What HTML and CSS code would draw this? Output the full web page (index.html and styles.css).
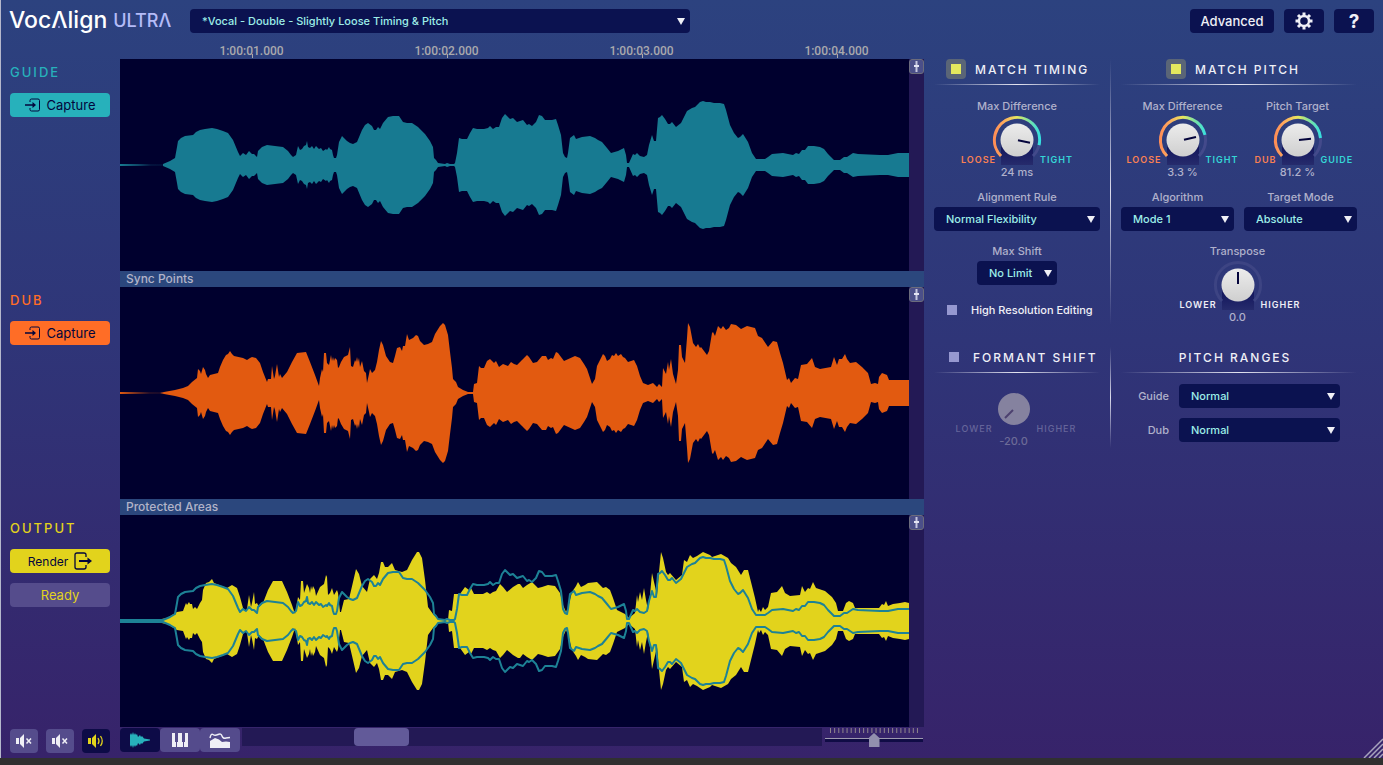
FILE: index.html
```html
<!DOCTYPE html>
<html lang="en">
<head>
<meta charset="utf-8">
<title>VocAlign Ultra</title>
<link rel="stylesheet" href="styles.css">
</head>
<body>
<svg class="defs" width="0" height="0" aria-hidden="true">
  <defs>
    <linearGradient id="arc" gradientUnits="userSpaceOnUse" x1="-23" y1="0" x2="23" y2="0">
      <stop offset="0" stop-color="#ff8d55"/><stop offset=".2" stop-color="#ffa95c"/><stop offset=".5" stop-color="#e6e85e"/><stop offset=".75" stop-color="#7de3a0"/><stop offset="1" stop-color="#35dfe0"/>
    </linearGradient>
    <linearGradient id="face" x1="0" y1="0" x2="0" y2="1"><stop offset="0" stop-color="#ececec"/><stop offset="1" stop-color="#cfcfcf"/></linearGradient>
    <linearGradient id="shade" x1="0" y1="0" x2="0" y2="1"><stop offset="0" stop-color="#10135a"/><stop offset="1" stop-color="#262b6c"/></linearGradient>
    <linearGradient id="fadeGuide"><stop offset="0" stop-color="#177a91"/><stop offset=".4" stop-color="#177a91" stop-opacity=".6"/><stop offset=".7" stop-color="#177a91" stop-opacity=".15"/><stop offset="1" stop-color="#177a91" stop-opacity=".1"/></linearGradient>
    <linearGradient id="fadeDub"><stop offset="0" stop-color="#e25a10"/><stop offset=".4" stop-color="#e25a10" stop-opacity=".5"/><stop offset=".7" stop-color="#e25a10" stop-opacity=".15"/><stop offset="1" stop-color="#e25a10" stop-opacity=".1"/></linearGradient>
    <path id="envGuide" vector-effect="non-scaling-stroke" d="M0 -1L43 -1 50 -4 55 -7 57 -18 58 -24 61 -27 65 -29 73 -30 76 -33 80 -35 85 -36 92 -37 97 -36 103 -34 108 -32 113 -25 118 -13 120 -9 123 -12 126 -10 129 -14 132 -11 134 -11 137 -8 138 -14 142 -18 147 -20 155 -19 163 -18 168 -14 171 -10 173 -8 176 -10 178 -19 180 -15 182 -16 184 -19 186 -20 187 -24 188 -18 190 -17 192 -19 194 -16 196 -19 199 -16 201 -17 203 -14 206 -16 207 -15 209 -18 210 -16 212 -15 213 -10 214 -7 216 -7 217 -10 219 -23 222 -29 227 -24 230 -22 233 -21 237 -23 242 -35 245 -40 248 -42 252 -39 254 -35 256 -35 258 -38 260 -36 263 -42 268 -48 273 -49 279 -49 283 -43 287 -42 292 -42 298 -38 305 -31 310 -24 313 -18 314 -7 316 -5 318 -2 325 -1 327 -2 330 -1 334 -1 335 -2 337 -12 339 -27 342 -26 347 -26 350 -32 353 -37 357 -36 364 -36 368 -37 370 -39 373 -36 376 -38 379 -38 382 -47 385 -51 387 -49 390 -46 393 -47 397 -43 400 -44 403 -45 407 -40 409 -41 412 -39 416 -43 419 -50 422 -49 425 -45 432 -45 436 -46 438 -40 441 -30 443 -12 445 -8 447 -7 448 -12 450 -27 454 -30 456 -26 462 -28 470 -29 475 -27 478 -25 482 -23 487 -17 491 -12 498 -14 504 -17 506 -10 507 -2 509 -2 513 -11 515 -10 517 -12 520 -9 524 -8 527 -10 529 -20 532 -30 534 -24 536 -24 538 -47 540 -48 542 -50 545 -46 548 -41 550 -41 552 -43 556 -38 561 -42 567 -54 572 -57 575 -58 580 -63 583 -64 586 -63 590 -63 594 -62 600 -62 604 -61 606 -55 610 -40 614 -32 618 -27 620 -28 623 -31 628 -23 632 -12 636 -6 645 -6 648 -8 652 -11 663 -12 673 -10 676 -12 679 -11 682 -15 685 -15 688 -19 694 -19 700 -18 704 -16 708 -11 714 -5 720 -5 724 -8 727 -8 733 -12 738 -11 760 -10 768 -10 778 -12 789 -12"/>
    <path id="fillGuide" d="M43 0L43 -1 50 -4 55 -7 57 -18 58 -24 61 -27 65 -29 73 -30 76 -33 80 -35 85 -36 92 -37 97 -36 103 -34 108 -32 113 -25 118 -13 120 -9 123 -12 126 -10 129 -14 132 -11 134 -11 137 -8 138 -14 142 -18 147 -20 155 -19 163 -18 168 -14 171 -10 173 -8 176 -10 178 -19 180 -15 182 -16 184 -19 186 -20 187 -24 188 -18 190 -17 192 -19 194 -16 196 -19 199 -16 201 -17 203 -14 206 -16 207 -15 209 -18 210 -16 212 -15 213 -10 214 -7 216 -7 217 -10 219 -23 222 -29 227 -24 230 -22 233 -21 237 -23 242 -35 245 -40 248 -42 252 -39 254 -35 256 -35 258 -38 260 -36 263 -42 268 -48 273 -49 279 -49 283 -43 287 -42 292 -42 298 -38 305 -31 310 -24 313 -18 314 -7 316 -5 318 -2 325 -1 327 -2 330 -1 334 -1 335 -2 337 -12 339 -27 342 -26 347 -26 350 -32 353 -37 357 -36 364 -36 368 -37 370 -39 373 -36 376 -38 379 -38 382 -47 385 -51 387 -49 390 -46 393 -47 397 -43 400 -44 403 -45 407 -40 409 -41 412 -39 416 -43 419 -50 422 -49 425 -45 432 -45 436 -46 438 -40 441 -30 443 -12 445 -8 447 -7 448 -12 450 -27 454 -30 456 -26 462 -28 470 -29 475 -27 478 -25 482 -23 487 -17 491 -12 498 -14 504 -17 506 -10 507 -2 509 -2 513 -11 515 -10 517 -12 520 -9 524 -8 527 -10 529 -20 532 -30 534 -24 536 -24 538 -47 540 -48 542 -50 545 -46 548 -41 550 -41 552 -43 556 -38 561 -42 567 -54 572 -57 575 -58 580 -63 583 -64 586 -63 590 -63 594 -62 600 -62 604 -61 606 -55 610 -40 614 -32 618 -27 620 -28 623 -31 628 -23 632 -12 636 -6 645 -6 648 -8 652 -11 663 -12 673 -10 676 -12 679 -11 682 -15 685 -15 688 -19 694 -19 700 -18 704 -16 708 -11 714 -5 720 -5 724 -8 727 -8 733 -12 738 -11 760 -10 768 -10 778 -12 789 -12V0Z"/>
    <path id="fillDub" d="M40 0L44 -1 55 -3 63 -5 68 -7 72 -11 77 -15 78 -24 80 -22 81 -19 83 -26 85 -23 86 -19 88 -15 90 -18 98 -20 100 -26 103 -33 106 -38 108 -39 110 -42 112 -39 114 -37 123 -35 127 -33 130 -35 132 -36 136 -35 140 -30 143 -21 147 -11 148 -14 151 -14 152 -27 154 -14 155 -17 157 -29 159 -16 160 -19 162 -15 167 -21 172 -31 177 -40 186 -41 190 -31 195 -18 199 -7 200 -15 202 -24 203 -21 204 -40 206 -40 207 -30 209 -28 211 -38 212 -32 213 -36 214 -32 215 -35 217 -33 218 -25 219 -26 221 -31 224 -36 228 -38 230 -46 231 -27 233 -26 235 -33 236 -31 237 -36 238 -31 239 -35 240 -26 242 -32 244 -22 246 -20 247 -10 249 -19 250 -24 252 -20 255 -23 257 -31 259 -43 261 -52 263 -48 266 -37 270 -31 273 -30 275 -37 277 -45 280 -46 282 -42 283 -47 285 -47 287 -59 289 -53 293 -55 296 -58 298 -57 300 -52 304 -48 308 -49 312 -51 315 -59 320 -67 323 -70 325 -68 328 -58 330 -41 332 -25 333 -14 336 -11 338 -6 343 -3 348 -1 353 -1 354 -9 357 -10 359 -27 361 -25 364 -25 367 -32 370 -34 374 -30 376 -32 379 -26 383 -29 388 -27 391 -31 394 -29 397 -28 402 -33 405 -36 407 -38 409 -36 413 -30 417 -31 422 -37 426 -37 428 -33 431 -35 433 -34 436 -41 438 -40 441 -36 444 -32 455 -37 460 -35 464 -29 467 -24 470 -15 472 -9 475 -14 477 -27 481 -35 483 -39 485 -37 487 -32 490 -34 492 -38 494 -37 496 -40 498 -37 501 -39 503 -36 505 -35 508 -31 514 -33 517 -27 520 -17 523 -10 528 -8 533 -10 537 -6 539 -9 542 -6 543 -25 546 -19 548 -31 549 -23 551 -34 553 -19 556 -9 558 -23 559 -48 561 -48 562 -36 565 -30 567 -55 568 -70 570 -66 573 -50 576 -46 578 -49 580 -45 581 -46 587 -38 589 -42 592 -60 593 -61 595 -57 598 -67 601 -64 603 -67 606 -63 609 -65 611 -69 616 -68 621 -64 627 -67 635 -65 638 -57 642 -55 648 -46 653 -52 657 -51 660 -40 663 -30 667 -13 669 -15 671 -10 675 -15 678 -14 681 -28 687 -29 692 -35 695 -26 700 -24 711 -26 714 -36 717 -28 719 -34 722 -34 725 -39 727 -34 730 -30 736 -31 742 -26 748 -20 751 -9 755 -10 758 -9 759 -16 762 -20 767 -18 769 -13 789 -13V0Z"/>
    <path id="fillOut" d="M0 0L36 -1 47 -3 52 -6 57 -9 63 -10 66 -18 67 -16 69 -19 70 -17 72 -17 73 -12 75 -14 77 -12 80 -18 82 -21 83 -31 86 -38 89 -39 92 -42 94 -38 107 -33 112 -36 117 -33 120 -24 123 -13 125 -10 127 -12 129 -26 131 -14 132 -18 134 -29 135 -17 137 -18 139 -14 143 -18 148 -31 153 -40 162 -40 167 -29 172 -16 175 -7 177 -18 178 -24 180 -21 181 -40 183 -40 184 -28 187 -37 189 -33 190 -28 191 -35 192 -31 193 -35 195 -31 196 -25 200 -34 204 -37 206 -46 207 -44 208 -26 210 -28 212 -33 214 -26 217 -31 218 -28 220 -9 221 -9 224 -21 229 -22 233 -39 236 -52 239 -47 242 -35 247 -29 250 -42 254 -46 257 -42 259 -48 261 -59 263 -59 265 -54 268 -54 272 -58 275 -51 282 -49 287 -51 292 -61 297 -69 299 -69 302 -63 305 -41 308 -14 313 -7 319 -1 328 -1 329 -11 332 -10 334 -27 340 -27 345 -34 349 -31 351 -33 354 -27 363 -27 367 -29 370 -27 373 -29 376 -30 380 -37 383 -34 387 -29 393 -34 398 -37 400 -37 403 -33 407 -36 412 -39 418 -33 422 -34 428 -36 435 -35 440 -28 443 -16 446 -9 448 -13 452 -29 456 -35 458 -39 461 -34 465 -36 468 -38 477 -39 483 -33 486 -34 490 -31 493 -23 497 -11 505 -7 509 -3 515 -8 517 -26 518 -19 520 -29 522 -21 524 -33 526 -21 528 -11 530 -26 532 -48 534 -39 537 -26 539 -49 541 -69 543 -63 546 -49 548 -46 550 -48 556 -41 562 -46 564 -61 567 -59 570 -66 573 -63 577 -65 583 -69 590 -66 592 -64 601 -67 608 -63 611 -58 616 -54 621 -46 624 -51 628 -51 631 -39 635 -23 638 -9 639 -12 641 -9 643 -14 645 -11 648 -14 651 -28 657 -29 662 -35 665 -28 670 -25 680 -26 682 -35 685 -29 688 -33 690 -32 693 -39 696 -33 705 -30 712 -24 716 -18 718 -10 723 -10 726 -18 729 -20 733 -18 735 -13 759 -13 762 -17 764 -16 766 -20 768 -15 773 -17 780 -18 785 -19 789 -18V0Z"/>
  </defs>
</svg>

<div class="app">
  <header class="topbar">
    <h1 class="logo" aria-label="VocAlign Ultra"><span class="logo-main">Voc<span class="logo-a">Λ</span>lign</span> <span class="logo-sub">ULTRΛ</span></h1>
    <span class="pick preset"><select aria-label="Preset"><option>*Vocal - Double - Slightly Loose Timing &amp; Pitch</option></select></span>
    <div class="top-actions">
      <button class="dark" type="button">Advanced</button>
      <button class="dark square" type="button" aria-label="Settings">
        <svg width="18" height="18" viewBox="-9 -9 18 18"><circle r="5" fill="none" stroke="#efeff6" stroke-width="2.4"/><g stroke="#efeff6" stroke-width="3"><path d="M0 -8.500V-5.500M0 5.500V8.500M-8.500 0H-5.500M5.500 0H8.500M-6 -6L-4 -4M6 6L4 4M-6 6L-4 4M6 -6L4 -4"/></g></svg>
      </button>
      <button class="dark square help" type="button" aria-label="Help">?</button>
    </div>
  </header>

  <main class="main">
    <section class="editor">
      <div class="ruler"><span>1:00:01.000</span><span>1:00:02.000</span><span>1:00:03.000</span><span>1:00:04.000</span></div>

      <div class="side guide">
        <h2>GUIDE</h2>
        <button type="button"><svg width="16" height="14" viewBox="0 0 16 14"><path d="M5 4V2.500Q5 1 6.500 1H13Q14.500 1 14.500 2.500V11.500Q14.500 13 13 13H6.500Q5 13 5 11.500V10" fill="none" stroke="currentColor"/><path d="M0 7H9" stroke="currentColor" stroke-width="1.500"/><path d="M7.500 4L11 7 7.500 10Z" fill="currentColor"/></svg>Capture</button>
      </div>
      <div class="lane">
        <svg class="wave" viewBox="0 -106 789 212" preserveAspectRatio="none"><rect y="-1" width="44" height="2" fill="url(#fadeGuide)"/><g fill="#177a91"><use href="#fillGuide"/><use href="#fillGuide" transform="scale(1 -1)"/></g></svg>
        <div class="vscroll"><button type="button" aria-label="Guide zoom"><svg width="13" height="13"><path d="M6.500 1V12" stroke="#c5c6df" stroke-width="2"/><path d="M4 6H9" stroke="#e3e4f3" stroke-width="2"/></svg></button></div>
      </div>

      <div class="band">Sync Points</div>

      <div class="side dub">
        <h2>DUB</h2>
        <button type="button"><svg width="16" height="14" viewBox="0 0 16 14"><path d="M5 4V2.500Q5 1 6.500 1H13Q14.500 1 14.500 2.500V11.500Q14.500 13 13 13H6.500Q5 13 5 11.500V10" fill="none" stroke="currentColor"/><path d="M0 7H9" stroke="currentColor" stroke-width="1.500"/><path d="M7.500 4L11 7 7.500 10Z" fill="currentColor"/></svg>Capture</button>
      </div>
      <div class="lane">
        <svg class="wave" viewBox="0 -106 789 212" preserveAspectRatio="none"><rect y="-1" width="42" height="2" fill="url(#fadeDub)"/><g fill="#e25a10"><use href="#fillDub"/><use href="#fillDub" transform="scale(1 -1)"/></g></svg>
        <div class="vscroll"><button type="button" aria-label="Dub zoom"><svg width="13" height="13"><path d="M6.500 1V12" stroke="#c5c6df" stroke-width="2"/><path d="M4 6H9" stroke="#e3e4f3" stroke-width="2"/></svg></button></div>
      </div>

      <div class="band">Protected Areas</div>

      <div class="side output">
        <h2>OUTPUT</h2>
        <button type="button">Render<svg width="18" height="18" viewBox="0 0 18 18"><path d="M12 5V3Q12 1 10 1H3Q1 1 1 3V15Q1 17 3 17H10Q12 17 12 15V13" fill="none" stroke="currentColor" stroke-width="1.300"/><path d="M5 9H15" stroke="currentColor" stroke-width="2"/><path d="M13.500 5.500L18 9 13.500 12.500Z" fill="currentColor"/></svg></button>
        <div class="status" role="status">Ready</div>
      </div>
      <div class="lane">
        <svg class="wave" viewBox="0 -106 789 212" preserveAspectRatio="none"><g fill="#e2d31c"><use href="#fillOut"/><use href="#fillOut" transform="scale(1 -1)"/></g><g fill="none" stroke="#1d8296" stroke-width="2" stroke-linejoin="round"><use href="#envGuide"/><use href="#envGuide" transform="scale(1 -1)"/></g></svg>
        <div class="vscroll"><button type="button" aria-label="Output zoom"><svg width="13" height="13"><path d="M6.500 1V12" stroke="#c5c6df" stroke-width="2"/><path d="M4 6H9" stroke="#e3e4f3" stroke-width="2"/></svg></button></div>
      </div>

      <div class="mutes">
        <button type="button" aria-label="Mute guide"><svg width="18" height="16" viewBox="0 0 18 16"><path d="M1 5H4V11H1ZM5 5L9 1V15L5 11Z" fill="#efeff6"/><path d="M11.500 5.500L16 10.500M16 5.500L11.500 10.500" stroke="#efeff6" stroke-width="1.500"/></svg></button>
        <button type="button" aria-label="Mute dub"><svg width="18" height="16" viewBox="0 0 18 16"><path d="M1 5H4V11H1ZM5 5L9 1V15L5 11Z" fill="#efeff6"/><path d="M11.500 5.500L16 10.500M16 5.500L11.500 10.500" stroke="#efeff6" stroke-width="1.500"/></svg></button>
        <button class="on" type="button" aria-label="Play output"><svg width="18" height="16" viewBox="0 0 18 16"><path d="M1 5H4V11H1ZM5 5L9 1V15L5 11Z" fill="#e2d31c"/><path d="M11 5Q13 8 11 11M13.500 3Q17 8 13.500 13" fill="none" stroke="#e2d31c" stroke-width="1.300"/></svg></button>
      </div>
      <div class="bottom">
        <div class="views">
          <button class="on" type="button" aria-label="Waveform view"><svg width="20" height="16" viewBox="0 0 20 16"><path d="M0 8L0 3 1 1 2 3 3 0 4 3 5 1 6 3 7 2 8 5 10 3 11 5 12 4 14 6.500 20 7.500V8.500L14 9.500 12 12 11 11 10 13 8 11 7 14 6 13 5 15 4 13 3 16 2 13 1 15 0 13Z" fill="#27b1bb"/></svg></button>
          <button type="button" aria-label="Pitch view"><svg width="16" height="14" viewBox="0 0 16 14"><path d="M0 0H3V9H4V14H0ZM6 0H10V9H11V14H5V9H6ZM13 0H16V14H12V9H13Z" fill="#efeff6"/></svg></button>
          <button type="button" aria-label="Energy view"><svg width="22" height="15" viewBox="0 0 22 15"><path d="M1 15V8L6 5 10 6.500 13 9 17 8.500 21 9V15Z" fill="#efeff6"/><path d="M1 5Q2 0 4 1.500T9 1.500 13 3 17 5L21 4.500" fill="none" stroke="#efeff6" stroke-width="1.400"/></svg></button>
        </div>
        <div class="hscroll"><div class="thumb"></div></div>
        <div class="zoomer">
          <svg width="90" height="5" class="ticks" aria-hidden="true"><path d="M0 2.500H90" stroke="#8e858b" stroke-width="5" stroke-dasharray="1 3.140"/></svg>
          <input type="range" min="0" max="100" value="50" aria-label="Horizontal zoom">
        </div>
      </div>
    </section>

    <aside class="params">
      <section class="group timing">
        <h3><input type="checkbox" id="mt" checked><label for="mt">MATCH TIMING</label></h3>
        <div class="knob">
          <span class="name">Max Difference</span>
          <div class="dial"><span class="lo">LOOSE</span><svg width="42" height="50" viewBox="-21 -25 42 50"><rect x="-16" y="4" width="32" height="21" fill="url(#shade)"/><path d="M-16 16A22.600 22.600 0 1 1 16 16" fill="none" stroke="#434a8b" stroke-width="3"/><path d="M-16 16A22.600 22.600 0 1 1 22 5.200" fill="none" stroke="url(#arc)" stroke-width="3"/><circle r="16.500" fill="url(#face)"/><path d="M1 .3L13 2.800" stroke="#05053c" stroke-width="2"/></svg><span class="hi">TIGHT</span></div>
          <span class="value">24 ms</span>
        </div>
        <label class="field rule">Alignment Rule<span class="pick"><select><option>Normal Flexibility</option></select></span></label>
        <label class="field shift">Max Shift<span class="pick"><select><option>No Limit</option></select></span></label>
        <div class="check"><input type="checkbox" id="hre"><label for="hre">High Resolution Editing</label></div>
      </section>
      <div class="rule-v"></div>
      <section class="group pitch">
        <h3><input type="checkbox" id="mp" checked><label for="mp">MATCH PITCH</label></h3>
        <div class="pair">
          <div class="knob">
            <span class="name">Max Difference</span>
            <div class="dial"><span class="lo">LOOSE</span><svg width="42" height="50" viewBox="-21 -25 42 50"><rect x="-16" y="4" width="32" height="21" fill="url(#shade)"/><path d="M-16 16A22.600 22.600 0 1 1 16 16" fill="none" stroke="#434a8b" stroke-width="3"/><path d="M-16 16A22.600 22.600 0 1 1 22 -5.200" fill="none" stroke="url(#arc)" stroke-width="3"/><circle r="16.500" fill="url(#face)"/><path d="M1 -.3L13 -3" stroke="#05053c" stroke-width="2"/></svg><span class="hi">TIGHT</span></div>
            <span class="value">3.3 %</span>
          </div>
          <div class="knob">
            <span class="name">Pitch Target</span>
            <div class="dial"><span class="lo">DUB</span><svg width="42" height="50" viewBox="-21 -25 42 50"><rect x="-16" y="4" width="32" height="21" fill="url(#shade)"/><path d="M-16 16A22.600 22.600 0 1 1 16 16" fill="none" stroke="#434a8b" stroke-width="3"/><path d="M-16 16A22.600 22.600 0 1 1 22.500 -2" fill="none" stroke="url(#arc)" stroke-width="3"/><circle r="16.500" fill="url(#face)"/><path d="M1 0L13 -1.200" stroke="#05053c" stroke-width="2"/></svg><span class="hi">GUIDE</span></div>
            <span class="value">81.2 %</span>
          </div>
        </div>
        <div class="modes">
          <label class="field">Algorithm<span class="pick"><select><option>Mode 1</option></select></span></label>
          <label class="field">Target Mode<span class="pick"><select><option>Absolute</option></select></span></label>
        </div>
        <div class="knob transpose">
          <span class="name">Transpose</span>
          <div class="dial"><span class="lo">LOWER</span><svg width="42" height="50" viewBox="-21 -25 42 50"><rect x="-16" y="4" width="32" height="21" fill="url(#shade)"/><path d="M-16 16A22.600 22.600 0 1 1 16 16" fill="none" stroke="#3d4483" stroke-width="3"/><circle r="16.500" fill="url(#face)"/><path d="M0 -1V-13" stroke="#05053c" stroke-width="2"/></svg><span class="hi">HIGHER</span></div>
          <span class="value">0.0</span>
        </div>
      </section>

      <section class="group formant">
        <h3><input type="checkbox" id="fs"><label for="fs">FORMANT SHIFT</label></h3>
        <div class="knob off">
          <div class="dial"><span class="lo">LOWER</span><svg width="42" height="50" viewBox="-21 -25 42 50"><circle r="16" fill="#85829f"/><path d="M-1 1L-9 9" stroke="#4c416f" stroke-width="2"/></svg><span class="hi">HIGHER</span></div>
          <span class="value">-20.0</span>
        </div>
      </section>
      <div class="rule-v"></div>
      <section class="group ranges">
        <h3>PITCH RANGES</h3>
        <div class="range-rows">
          <label for="rg">Guide</label><span class="pick"><select id="rg"><option>Normal</option></select></span>
          <label for="rd">Dub</label><span class="pick"><select id="rd"><option>Normal</option></select></span>
        </div>
      </section>
    </aside>
  </main>
  <svg class="grip" width="20" height="20" aria-hidden="true"><path d="M1 20L20 1M6 20L20 6M11 20L20 11M16 20L20 16" stroke="#a7a3bd" stroke-width="1.500"/></svg>
</div>
<footer class="edge"></footer>
</body>
</html>
```

FILE: styles.css
```css
* { box-sizing: border-box; }
body {
  margin: 0;
  min-height: 100vh;
  display: flex;
  flex-direction: column;
  font-family: Inter, "Liberation Sans", sans-serif;
  font-size: 11px;
  font-weight: 500;
  color: #b0b1cb;
  background: #303030;
}
h1, h2, h3 { margin: 0; font-weight: 500; }
button, select, input { font: inherit; margin: 0; }
button { border: 0; padding: 0; display: flex; align-items: center; justify-content: center; border-radius: 4px; }
.defs { position: absolute; }

.app {
  flex: 1;
  display: flex;
  flex-direction: column;
  position: relative;
  border-left: 1px solid #b5b8cc;
  background: linear-gradient(#2c427f, #2f3578 45%, #37236a);
}
.edge { height: 7px; background: #303030; }
.grip { position: absolute; right: 0; bottom: 0; }

.topbar { display: flex; height: 43px; padding: 9px 9px 10px 8px; }
.logo { width: 181px; line-height: 22px; white-space: nowrap; display: flex; gap: 6px; }
.logo-main { font-size: 23px; color: #fff; }
.logo-a { position: relative; }
.logo-a::after { content: ""; position: absolute; left: 50%; bottom: 6px; width: 2px; height: 2px; margin-left: -1px; border-radius: 50%; background: #9ca5f0; }
.logo-sub { font-size: 18px; color: #b4bcf8; line-height: 24px; }
.top-actions { margin-left: auto; display: flex; gap: 10px; }
.dark { height: 24px; width: 84px; background: #0b1250; color: #efeff6; font-size: 13px; }
.square { width: 40px; }
.help { font-size: 19px; font-weight: 700; }

.pick { display: block; position: relative; height: 24px; }
.pick select {
  appearance: none;
  width: 100%;
  height: 24px;
  border: 0;
  border-radius: 4px;
  padding: 0 18px 0 12px;
  background: #0b1250;
  color: #9deee8;
}
.pick::after {
  content: "";
  position: absolute;
  right: 5px;
  top: 9px;
  border: 4px solid transparent;
  border-top: 7px solid #efeff6;
  border-bottom: 0;
  pointer-events: none;
}
.preset { flex: 0 1 500px; }

.main { flex: 1; display: grid; grid-template-columns: minmax(0, 1fr) 459px; }
.editor {
  display: grid;
  grid-template-columns: 119px minmax(0, 1fr);
  grid-template-rows: 16px minmax(160px, 1fr) 16px minmax(160px, 1fr) 16px minmax(160px, 1fr) 31px;
}
.ruler, .band { grid-column: 2; }
.ruler { display: flex; padding-left: 34px; overflow: hidden; }
.ruler span {
  flex: 0 0 195px;
  position: relative;
  text-align: center;
  font: 500 12px/16px Roboto, sans-serif;
  color: #a9a9ad;
}
.ruler span::after { content: ""; position: absolute; left: 50%; bottom: 1px; width: 1px; height: 4px; background: #a9a9ad; }
.band { background: #2b477d; padding-left: 6px; line-height: 16px; font-size: 12px; color: #b2b3c8; }

.side { padding: 5px 10px 0 9px; }
.side h2 { font-size: 13px; line-height: 16px; letter-spacing: 2px; margin-bottom: 13px; }
.side button { width: 100%; height: 24px; font-size: 13px; font-weight: 400; gap: 6px; color: #03063c; }
.guide h2 { color: #27b1bb; }
.guide button { background: #27b1bb; }
.dub h2 { color: #ff6d26; }
.lo { color: #fb8052; }
.dub button { background: #ff6d26; }
.output h2 { color: #e2d31c; }
.side.output button { background: #e2d31c; font-size: 12px; }
.status { margin-top: 10px; height: 24px; line-height: 24px; border-radius: 4px; text-align: center; font-size: 13px; font-weight: 400; background: #554c8c; color: #e2d31c; }

.lane { display: flex; min-height: 0; background: #00002e; }
.wave { flex: 1; min-width: 0; width: 100%; height: 100%; display: block; }
.vscroll { flex: 0 0 15px; background: #231955; }
.vscroll button { width: 15px; height: 15px; border: 1px solid #6b6c7c; border-radius: 3px; background: #4b4f89; }

.mutes { display: flex; gap: 8px; padding: 2px 10px 0 9px; }
.mutes button { width: 28px; height: 24px; background: #554c8c; }
.views { display: flex; }
.views button { width: 40px; height: 24px; background: #544b8c; }
.mutes .on, .views .on { background: #0d0b47; }
.bottom { display: flex; padding-top: 1px; }
.hscroll { flex: 1; margin: 0 3px 0 2px; height: 18px; background: #231955; display: flex; }
.thumb { width: 55px; margin-left: 112px; border-radius: 4px; background: #625a99; }
.zoomer { width: 99px; display: flex; flex-direction: column; }
.ticks { margin-left: 5px; }
.zoomer input { appearance: none; width: 98px; height: 14px; background: linear-gradient(#9d99b0, #9d99b0) 0 5px / 100% 1px no-repeat, linear-gradient(#100c45, #100c45) 0 6px / 100% 3px no-repeat; }
.zoomer input::-webkit-slider-thumb { appearance: none; width: 11px; height: 14px; background: #928fae; clip-path: polygon(50% 0, 100% 36%, 100% 100%, 0 100%, 0 36%); }

.params {
  display: grid;
  grid-template-columns: 166px 1px 236px;
  grid-template-rows: 266px auto;
  gap: 22px 10px;
  align-content: start;
  padding: 16px 0 0 10px;
}
.group { display: flex; flex-direction: column; }
.group h3 {
  display: flex;
  align-items: center;
  height: 26px;
  padding-bottom: 6px;
  font-size: 12px;
  letter-spacing: 2px;
  white-space: nowrap;
  color: #efeff6;
  background: linear-gradient(90deg, transparent, #e4e4f0 50%, transparent) 0 25px / 100% 1px no-repeat;
}
.group h3 input { flex: none; margin-right: 9px; }
.timing h3 { padding-left: 12px; }
.pitch h3 { padding-left: 45px; }
.formant h3 { padding-left: 15px; }
.formant h3 input { margin-right: 14px; }
.ranges h3 { justify-content: center; padding-right: 8px; }
input[type="checkbox"] { appearance: none; width: 10px; height: 10px; background: #9698d0; }
h3 input:checked { width: 20px; height: 20px; border-radius: 4px; border: 5px solid #5a6577; background: #e3e85e; }
.rule-v { background: linear-gradient(transparent, #dcdcec 50%, transparent); }

.knob { display: flex; flex-direction: column; text-align: center; line-height: 14px; margin-top: 14px; }
.name { margin-bottom: 2px; }
.dial { display: grid; grid-template-columns: 1fr 42px 1fr; align-items: end; }
.dial svg { overflow: visible; }
.dial span { font-size: 9px; line-height: 10px; font-weight: 600; letter-spacing: 1px; }
.lo { text-align: right; }
.hi { text-align: left; padding-left: 2px; color: #35d6d6; }
.transpose .lo, .transpose .hi { color: #efeff6; }
.pair { display: grid; grid-template-columns: 115px 115px; padding-left: 4px; }
.field { display: block; text-align: center; line-height: 14px; margin-top: 11px; }
.field .pick { margin-top: 3px; }
.shift { align-self: center; width: 80px; margin-top: 13px; }
.modes { display: grid; grid-template-columns: 1fr 1fr; gap: 10px; }
.transpose { margin: 13px 3px 0 0; }
.check { display: flex; align-items: center; gap: 14px; padding-left: 13px; margin-top: 17px; line-height: 16px; color: #efeff6; white-space: nowrap; }
.off { margin: 11px 7px 0 0; color: #6d6b97; }
.off .lo, .off .hi { color: #66659a; font-weight: 500; }
.range-rows { display: grid; grid-template-columns: 48px 161px; gap: 10px; margin-top: 11px; line-height: 24px; text-align: right; }
```
